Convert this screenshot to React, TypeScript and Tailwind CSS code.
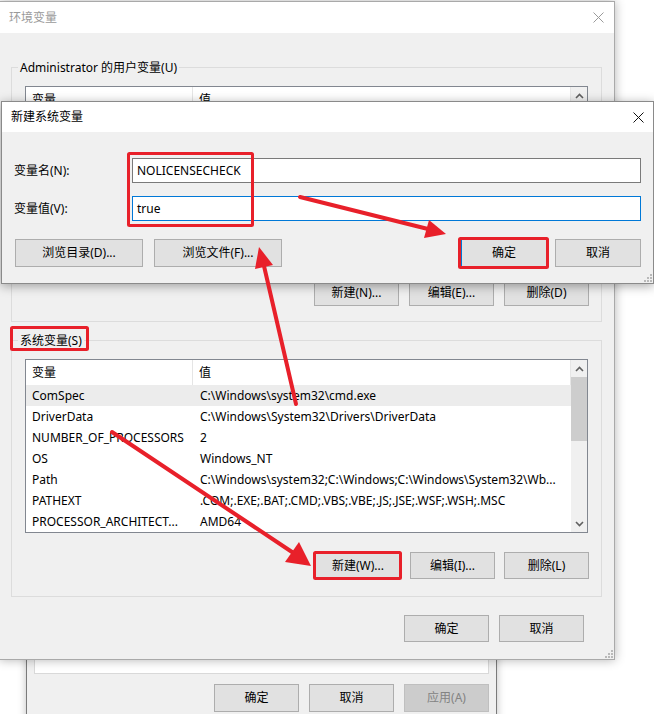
import React from "react";

const FONT = "[font-family:'Noto_Sans','Noto_Sans_CJK_SC',sans-serif]";

const SYS_ROWS: { name: string; value: string }[] = [
  { name: "ComSpec", value: "C:\\Windows\\system32\\cmd.exe" },
  { name: "DriverData", value: "C:\\Windows\\System32\\Drivers\\DriverData" },
  { name: "NUMBER_OF_PROCESSORS", value: "2" },
  { name: "OS", value: "Windows_NT" },
  { name: "Path", value: "C:\\Windows\\system32;C:\\Windows;C:\\Windows\\System32\\Wb..." },
  { name: "PATHEXT", value: ".COM;.EXE;.BAT;.CMD;.VBS;.VBE;.JS;.JSE;.WSF;.WSH;.MSC" },
  { name: "PROCESSOR_ARCHITECT...", value: "AMD64" },
];

function Btn({ children, className = "", disabled = false }: { children: React.ReactNode; className?: string; disabled?: boolean }) {
  return (
    <div
      className={`flex shrink-0 items-center justify-center border text-[12px] ${
        disabled ? "border-[#bfbfbf] bg-[#cccccc] text-[#838383]" : "border-[#adadad] bg-[#e1e1e1] text-black"
      } ${className}`}
    >
      {children}
    </div>
  );
}

function CloseX({ color }: { color: string }) {
  return (
    <svg width="11" height="11" viewBox="0 0 11 11">
      <path d="M0.5 0.5 L10.5 10.5 M10.5 0.5 L0.5 10.5" stroke={color} strokeWidth="1" />
    </svg>
  );
}

function Grip() {
  const dots = [[8, 2], [5, 5], [8, 5], [2, 8], [5, 8], [8, 8]];
  return (
    <svg width="10" height="10" viewBox="0 0 10 10">
      {dots.map(([x, y], i) => <rect key={i} x={x} y={y} width="2" height="2" fill="#b9b9b9" />)}
    </svg>
  );
}

function Chevron({ down = false }: { down?: boolean }) {
  return (
    <svg width="9" height="6" viewBox="0 0 9 6">
      <path d={down ? "M1 1 L4.5 4.5 L8 1" : "M1 5 L4.5 1.5 L8 5"} stroke="#606060" strokeWidth="1.6" fill="none" />
    </svg>
  );
}

function ListView({ rows, height }: { rows: { name: string; value: string }[]; height: string }) {
  return (
    <div className={`mx-[13px] flex border border-[#828790] bg-white ${height}`}>
      <div className="min-w-0 flex-1">
        <div className="flex h-[25px] items-center border-r border-[#e5e5e5] text-[12px] text-black">
          <div className="h-full w-[167px] border-r border-[#e5e5e5] pl-[6px] leading-[25px]">变量</div>
          <div className="pl-[6px]">值</div>
        </div>
        {rows.map((r, i) => (
          <div key={r.name} className={`flex h-[21px] items-center text-[12px] text-black ${i === 0 ? "bg-[#ececec]" : ""}`}>
            <div className="w-[167px] overflow-hidden whitespace-nowrap pl-[6px]">{r.name}</div>
            <div className="min-w-0 flex-1 overflow-hidden whitespace-nowrap pl-[7px]">{r.value}</div>
          </div>
        ))}
      </div>
      <div className="flex w-[16px] flex-col bg-[#f0f0f0]">
        <div className="flex h-[17px] items-center justify-center"><Chevron /></div>
        <div className="h-[64px] bg-[#cdcdcd]" />
        <div className="flex-1" />
        <div className="flex h-[17px] items-center justify-center"><Chevron down /></div>
      </div>
    </div>
  );
}

export default function App() {
  return (
    <div className={`relative h-[714px] w-[654px] overflow-hidden bg-white ${FONT}`}>
      {/* 系统属性 (behind) */}
      <div className="absolute left-[26px] top-[630px] flex h-[100px] w-[471px] flex-col border border-[#7a7a7a] bg-[#f0f0f0] px-[7px] shadow-[0_0_8px_rgba(0,0,0,0.25)]">
        <div className="mt-[8px] h-[35px] border border-[#d9d9d9] bg-white" />
        <div className="mt-[10px] flex justify-end gap-[10px]">
          <Btn className="h-[28px] w-[85px]">确定</Btn>
          <Btn className="h-[28px] w-[85px]">取消</Btn>
          <Btn className="h-[28px] w-[85px]" disabled>应用(A)</Btn>
        </div>
      </div>

      {/* 环境变量 */}
      <div className="absolute left-[-1px] top-[1px] flex h-[659px] w-[616px] flex-col border border-[#a9a9a9] bg-[#f0f0f0] shadow-[0_0_10px_rgba(0,0,0,0.3)]">
        <div className="flex h-[31px] items-center justify-between bg-white pl-[9px] pr-[10px]">
          <span className="text-[12px] text-[#9a9a9a]">环境变量</span>
          <CloseX color="#9a9a9a" />
        </div>
        <fieldset className="ml-[11px] mr-[12px] mt-[26px] border border-[#dcdcdc]">
          <legend className="ml-[6px] px-[2px] text-[12px] leading-[17px] text-black">Administrator 的用户变量(U)</legend>
          <div className="mt-[10px]">
            <ListView rows={[]} height="h-[182px]" />
          </div>
          <div className="mr-[12px] mt-[11px] flex justify-end gap-[10px] pb-[15px]">
            <Btn className="h-[27px] w-[85px]">新建(N)...</Btn>
            <Btn className="h-[27px] w-[85px]">编辑(E)...</Btn>
            <Btn className="h-[27px] w-[85px]">删除(D)</Btn>
          </div>
        </fieldset>
        <fieldset className="ml-[11px] mr-[12px] mt-[10px] border border-[#dcdcdc]">
          <legend className="ml-[6px] px-[2px] text-[12px] leading-[17px] text-black">系统变量(S)</legend>
          <div className="mt-[10px]">
            <ListView rows={SYS_ROWS} height="h-[174px]" />
          </div>
          <div className="mr-[12px] mt-[19px] flex justify-end gap-[9px] pb-[17px]">
            <Btn className="h-[27px] w-[86px]">新建(W)...</Btn>
            <Btn className="h-[27px] w-[85px]">编辑(I)...</Btn>
            <Btn className="h-[27px] w-[85px]">删除(L)</Btn>
          </div>
        </fieldset>
        <div className="mr-[30px] mt-[18px] flex justify-end gap-[10px]">
          <Btn className="h-[27px] w-[85px]">确定</Btn>
          <Btn className="h-[27px] w-[85px]">取消</Btn>
        </div>
        <div className="mt-auto flex justify-end pb-[1px] pr-[1px]"><Grip /></div>
      </div>

      {/* 新建系统变量 */}
      <div className="absolute left-[1px] top-[101px] flex h-[183px] w-[653px] flex-col border border-[#8a8a8a] bg-[#f0f0f0] shadow-[0_2px_10px_rgba(0,0,0,0.35)]">
        <div className="flex h-[30px] items-center justify-between bg-white pl-[9px] pr-[9px]">
          <span className="text-[12px] text-black">新建系统变量</span>
          <CloseX color="#111111" />
        </div>
        <div className="mt-[26px] flex flex-col gap-[13px] pl-[12px] pr-[12px]">
          <div className="flex items-center">
            <span className="w-[118px] text-[12px] text-black">变量名(N):</span>
            <div className="flex h-[25px] flex-1 items-center border border-[#7a7a7a] bg-white pl-[4px] text-[12px] text-black">NOLICENSECHECK</div>
          </div>
          <div className="flex items-center">
            <span className="w-[118px] text-[12px] text-black">变量值(V):</span>
            <div className="flex h-[25px] flex-1 items-center border border-[#0078d7] bg-white pl-[4px] text-[12px] text-black">true</div>
          </div>
        </div>
        <div className="mt-[18px] flex items-center pl-[13px] pr-[12px]">
          <Btn className="h-[28px] w-[128px]">浏览目录(D)...</Btn>
          <Btn className="ml-[11px] h-[28px] w-[128px]">浏览文件(F)...</Btn>
          <div className="flex-1" />
          <Btn className="h-[28px] w-[86px] !border-[#0078d7]">确定</Btn>
          <Btn className="ml-[8px] h-[28px] w-[86px]">取消</Btn>
        </div>
        <div className="mt-auto flex justify-end pb-[1px] pr-[1px]"><Grip /></div>
      </div>

      {/* annotations */}
      <svg className="pointer-events-none absolute left-0 top-0" width="654" height="714" viewBox="0 0 654 714">
        <g fill="none" stroke="#e8202a" strokeWidth="3">
          <rect x="128.5" y="153.5" width="124" height="72" rx="1" />
          <rect x="459.5" y="238.5" width="88" height="29" rx="1" />
          <rect x="11.5" y="327.5" width="76" height="22" rx="1" />
          <rect x="314.5" y="552.5" width="86" height="26" rx="1" />
        </g>
        <g stroke="#e8202a" strokeWidth="4" strokeLinecap="round">
          <line x1="300" y1="197" x2="428" y2="229" />
          <line x1="296" y1="404" x2="264" y2="266" />
          <line x1="112" y1="432" x2="292" y2="552" />
        </g>
        <g fill="#e8202a">
          <polygon points="446,234 424,238 429,220" />
          <polygon points="259,247 273,265 255,269" />
          <polygon points="311,566 285,562 299,542" />
        </g>
      </svg>
    </div>
  );
}
